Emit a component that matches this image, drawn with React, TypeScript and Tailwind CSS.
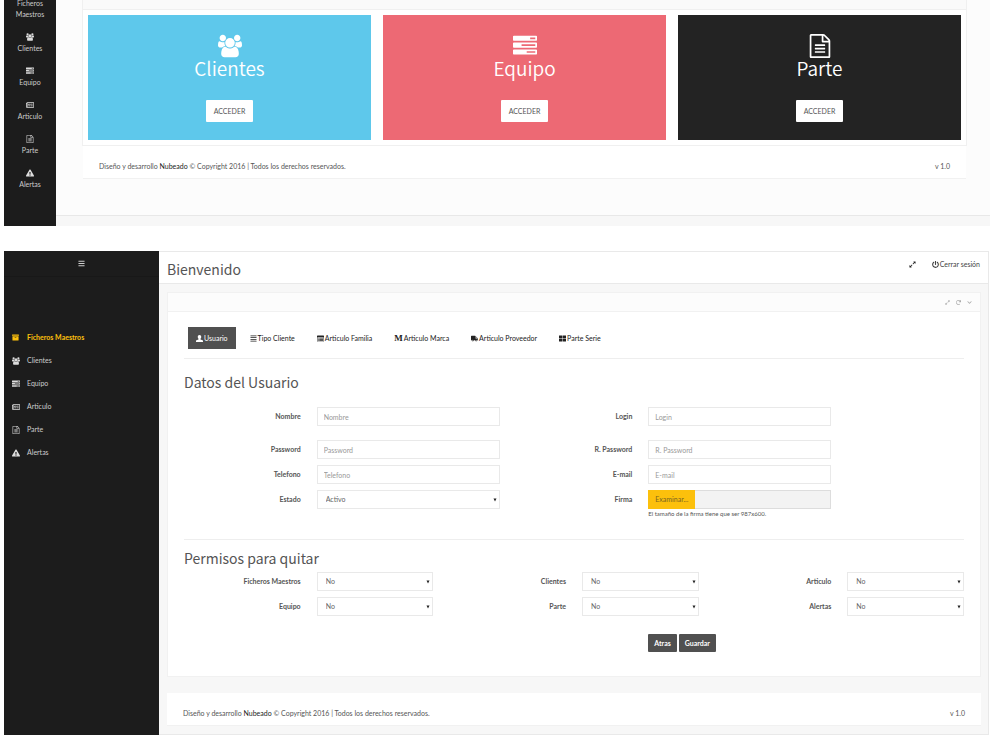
import React, { useState } from "react";
import {
  FaAlignJustify,
  FaArchive,
  FaBars,
  FaChevronDown,
  FaExclamationTriangle,
  FaExpandAlt,
  FaPowerOff,
  FaRedo,
  FaRegNewspaper,
  FaThLarge,
  FaTruck,
} from "react-icons/fa";

interface IconProps {
  className?: string;
}

const UsersIcon: React.FC<IconProps> = ({ className }) => (
  <svg viewBox="0 0 1920 1792" fill="currentColor" className={className}>
    <path d="M593 896q-162 5-265 128h-134q-82 0-138-40.5t-56-118.5q0-353 124-353 6 0 43.5 21t97.5 42.5 119 21.5q67 0 133-23-5 37-5 66 0 139 81 256zm1071 637q0 120-73 189.5t-194 69.5h-874q-121 0-194-69.5t-73-189.5q0-53 3.5-103.5t14-109 26.5-108.5 43-97.5 62-81 85.5-53.5 111.5-20q10 0 43 21.5t73 48 107 48 135 21.5 135-21.5 107-48 73-48 43-21.5q61 0 111.5 20t85.5 53.5 62 81 43 97.5 26.5 108.5 14 109 3.5 103.5zm-1024-1277q0 106-75 181t-181 75-181-75-75-181 75-181 181-75 181 75 75 181zm704 384q0 159-112.5 271.5t-271.5 112.5-271.5-112.5-112.5-271.5 112.5-271.5 271.5-112.5 271.5 112.5 112.5 271.5zm576 225q0 78-56 118.5t-138 40.5h-134q-103-123-265-128 81-117 81-256 0-29-5-66 66 23 133 23 59 0 119-21.5t97.5-42.5 43.5-21q124 0 124 353zm-128-609q0 106-75 181t-181 75-181-75-75-181 75-181 181-75 181 75 75 181z" />
  </svg>
);

const TasksIcon: React.FC<IconProps> = ({ className }) => (
  <svg viewBox="0 0 1792 1792" fill="currentColor" className={className}>
    <path d="M1024 1408h640v-128h-640v128zm-384-512h1024v-128h-1024v128zm640-512h384v-128h-384v128zm512 832v256q0 26-19 45t-45 19h-1664q-26 0-45-19t-19-45v-256q0-26 19-45t45-19h1664q26 0 45 19t19 45zm0-512v256q0 26-19 45t-45 19h-1664q-26 0-45-19t-19-45v-256q0-26 19-45t45-19h1664q26 0 45 19t19 45zm0-512v256q0 26-19 45t-45 19h-1664q-26 0-45-19t-19-45v-256q0-26 19-45t45-19h1664q26 0 45 19t19 45z" />
  </svg>
);

const FileIcon: React.FC<IconProps> = ({ className }) => (
  <svg viewBox="0 0 1792 1792" fill="currentColor" className={className}>
    <path d="M1596 380q28 28 48 76t20 88v1152q0 40-28 68t-68 28h-1344q-40 0-68-28t-28-68v-1600q0-40 28-68t68-28h896q40 0 88 20t76 48zm-444-244v376h376q-10-29-22-41l-313-313q-12-12-41-22zm384 1528v-1024h-416q-40 0-68-28t-28-68v-416h-768v1536h1280zm-1024-864q0-14 9-23t23-9h704q14 0 23 9t9 23v64q0 14-9 23t-23 9h-704q-14 0-23-9t-9-23v-64zm736 224q14 0 23 9t9 23v64q0 14-9 23t-23 9h-704q-14 0-23-9t-9-23v-64q0-14 9-23t23-9h704zm0 256q14 0 23 9t9 23v64q0 14-9 23t-23 9h-704q-14 0-23-9t-9-23v-64q0-14 9-23t23-9h704z" />
  </svg>
);

const UserIcon: React.FC<IconProps> = ({ className }) => (
  <svg viewBox="0 0 16 16" fill="currentColor" className={className}>
    <path d="M8 0c2.500 0 4 1.900 4 4.500 0 1.800-.8 3.300-1.700 4.200v1.300l4.700 2.200c.7.400 1 .9 1 1.600V16H0v-2.200c0-.7.300-1.200 1-1.600L5.700 10V8.700C4.800 7.800 4 6.300 4 4.500 4 1.900 5.500 0 8 0z" />
  </svg>
);

const ListAltIcon: React.FC<IconProps> = ({ className }) => (
  <svg viewBox="0 0 16 16" fill="currentColor" className={className}>
    <path fillRule="evenodd" d="M1 1h14a1 1 0 0 1 1 1v12a1 1 0 0 1-1 1H1a1 1 0 0 1-1-1V2a1 1 0 0 1 1-1zm0 4v9h14V5z" />
    <path d="M2 6h2v2H2zM5 6h9v2H5zM2 9h2v1H2zM5 9h9v1H5zM2 11h2v2H2zM5 11h9v2H5z" />
  </svg>
);

// letter mark used by the "Marca" tab
const MarcaIcon: React.FC<IconProps> = () => (
  <span className="font-['Liberation_Serif',serif] text-[9px] leading-none font-bold">M</span>
);

const menu = [
  { label: "Clientes", Icon: UsersIcon },
  { label: "Equipo", Icon: TasksIcon },
  { label: "Articulo", Icon: FaRegNewspaper },
  { label: "Parte", Icon: FileIcon },
  { label: "Alertas", Icon: FaExclamationTriangle },
];

const cards = [
  { label: "Clientes", Icon: UsersIcon, color: "bg-[#5ec8eb]" },
  { label: "Equipo", Icon: TasksIcon, color: "bg-[#ed6974]" },
  { label: "Parte", Icon: FileIcon, color: "bg-[#232323]" },
];

const tabs = [
  { label: "Usuario", Icon: UserIcon },
  { label: "Tipo Cliente", Icon: FaAlignJustify },
  { label: "Articulo Familia", Icon: ListAltIcon },
  { label: "Articulo Marca", Icon: MarcaIcon },
  { label: "Articulo Proveedor", Icon: FaTruck },
  { label: "Parte Serie", Icon: FaThLarge },
];

const permisos = ["Ficheros Maestros", "Clientes", "Articulo", "Equipo", "Parte", "Alertas"];

const labelClass = "col-span-2 px-2 text-right text-[7px] leading-[19px] font-bold text-[#555]";
const controlClass =
  "block h-[19px] w-full appearance-none rounded-none border border-[#e9e9e9] bg-white px-[6px] text-[7px] text-[#666] outline-none placeholder:text-[#999]";

const TextField: React.FC<{ id: string; label: string; type?: string }> = ({ id, label, type = "text" }) => (
  <>
    <label htmlFor={id} className={labelClass}>{label}</label>
    <div className="col-span-3 px-2">
      <input id={id} type={type} placeholder={label} className={controlClass} />
    </div>
  </>
);

const SelectField: React.FC<{ id: string; label: string; options: string[]; wide?: boolean }> = ({
  id,
  label,
  options,
  wide,
}) => (
  <>
    <label htmlFor={id} className={labelClass}>{label}</label>
    <div className={wide ? "col-span-3 px-2" : "col-span-2 px-2"}>
      <div className="relative">
        <select id={id} className={`${controlClass} pl-2`}>
          {options.map((o) => (
            <option key={o}>{o}</option>
          ))}
        </select>
        <svg viewBox="0 0 8 8" className="pointer-events-none absolute top-2 right-[3px] size-1 fill-[#222]">
          <path d="M1 1h6L4 7z" />
        </svg>
      </div>
    </div>
  </>
);

const Footer: React.FC = () => (
  <footer className="flex h-[33px] items-center justify-between border-b border-[#f1f1f1] bg-white px-4 pt-2 text-[7px] leading-3 text-[#555]">
    <p>
      Diseño y desarrollo <a href="#" className="text-[#222]">Nubeado</a> © Copyright 2016 | Todos los derechos reservados.
    </p>
    <p>v 1.0</p>
  </footer>
);

const HomePanel: React.FC = () => (
  <section className="mr-[10px] ml-1 flex h-[226px] overflow-hidden">
    <nav className="w-[52px] shrink-0 bg-[#1c1c1c] text-center text-[7px] text-[#ccc]">
      <a href="#" className="-mt-[2px] block h-[34px] leading-[11px]">
        Ficheros
        <br />
        Maestros
      </a>
      {menu.map(({ label, Icon }) => (
        <a key={label} href="#" className="flex h-[34px] flex-col items-center gap-px pt-px leading-3">
          <Icon className="size-2 text-[#ddd]" />
          {label}
        </a>
      ))}
    </nav>
    <div className="flex min-w-0 flex-1 flex-col bg-[#fcfcfc]">
      <div className="flex-1 pr-[23px] pl-[26px]">
        <div className="border border-t-0 border-[#f0f0f0] bg-white">
          <div className="h-[10px] border-b border-[#f0f0f0] bg-[#fafafa]" />
          <div className="grid grid-cols-3 gap-3 p-[5px]">
            {cards.map(({ label, Icon, color }) => (
              <div key={label} className={`flex h-[125px] flex-col items-center pt-[19px] text-white ${color}`}>
                <Icon className="size-6" />
                <h2 className="text-[19px] leading-5 font-[350]">{label}</h2>
                <button className="mt-[22px] h-[22px] rounded-[1px] bg-white px-2 text-[7px] text-[#555]">ACCEDER</button>
              </div>
            ))}
          </div>
        </div>
        <div className="px-px">
          <Footer />
        </div>
      </div>
      <div className="h-[11px] border-t border-[#e8e8e8] bg-[#f7f7f7]" />
    </div>
  </section>
);

const App: React.FC = () => {
  const [tab, setTab] = useState("Usuario");

  return (
    <main className="min-h-screen bg-white font-['Lato','Noto_Sans',sans-serif] [&_h1]:font-['Noto_Sans_CJK_JP',sans-serif] [&_h2]:font-['Noto_Sans_CJK_JP',sans-serif]">
      <HomePanel />

      <section className="mt-[25px] mr-[11px] ml-1 flex">
        <aside className="w-[155px] shrink-0 bg-[#1c1c1c] text-[7px] text-[#ccc]">
          <div className="flex h-[26px] items-center justify-center border-b border-[#181818]">
            <button aria-label="Menu">
              <FaBars className="size-[7px]" />
            </button>
          </div>
          <nav className="pt-[49px]">
            <a href="#" className="flex h-[23px] items-center gap-2 px-2 font-bold text-[#fcc00c]">
              <FaArchive className="size-[7px]" />
              Ficheros Maestros
            </a>
            {menu.map(({ label, Icon }) => (
              <a key={label} href="#" className="flex h-[23px] items-center gap-[7px] px-2">
                <Icon className="size-2 text-[#ddd]" />
                {label}
              </a>
            ))}
          </nav>
        </aside>

        <div className="min-w-0 flex-1 border-r border-b border-[#e9e9e9] bg-[#f7f7f7] pb-2">
          <header className="flex h-[33px] justify-between border-y border-[#e9e9e9] bg-white px-2">
            <h1 className="pt-[5px] text-[14px] leading-6 text-[#555]">Bienvenido</h1>
            <div className="flex h-6 items-center gap-4 text-[7px] text-[#444]">
              <button aria-label="Pantalla completa">
                <FaExpandAlt className="size-[7px] text-[#222]" />
              </button>
              <a href="#" className="flex items-center gap-px">
                <FaPowerOff className="size-[7px]" />
                Cerrar sesión
              </a>
            </div>
          </header>

          <div className="mt-2 mr-[7px] ml-2">
            <div className="border border-[#f1f1f1] bg-white">
              <div className="flex h-[19px] items-center justify-end gap-[6px] border-b border-[#f1f1f1] bg-[#fcfcfc] pr-2 text-[#aaa]">
                <button aria-label="Expandir"><FaExpandAlt className="size-[5px]" /></button>
                <button aria-label="Recargar"><FaRedo className="size-[5px]" /></button>
                <button aria-label="Contraer"><FaChevronDown className="size-[5px]" /></button>
              </div>

              <div className="px-4">
                <div className="flex h-[47px] items-center gap-[6px] border-b border-[#eee] pt-[6px] pl-1">
                  {tabs.map(({ label, Icon }) => (
                    <button
                      key={label}
                      onClick={() => setTab(label)}
                      className={`flex h-[22px] items-center gap-px px-2 text-[7px] ${
                        tab === label ? "bg-[#505050] text-white" : "text-[#222]"
                      }`}
                    >
                      <Icon className="size-[7px]" />
                      {label}
                    </button>
                  ))}
                </div>

                <form onSubmit={(e) => e.preventDefault()}>
                  <h2 className="pt-[11px] text-[14px] leading-6 text-[#555]">Datos del Usuario</h2>
                  <div className="-mx-2 mt-[13px] grid grid-cols-12">
                    <TextField id="nombre" label="Nombre" />
                    <TextField id="login" label="Login" />
                  </div>
                  <div className="-mx-2 mt-[14px] grid grid-cols-12 gap-y-[6px]">
                    <TextField id="password" label="Password" type="password" />
                    <TextField id="rpassword" label="R. Password" type="password" />
                    <div className="col-span-2" />
                    <TextField id="telefono" label="Telefono" />
                    <TextField id="email" label="E-mail" type="email" />
                    <div className="col-span-2" />
                    <SelectField id="estado" label="Estado" options={["Activo", "Inactivo"]} wide />
                    <label htmlFor="firma" className={labelClass}>Firma</label>
                    <div className="relative col-span-3 px-2">
                      <input id="firma" type="file" className="sr-only" />
                      <label htmlFor="firma" className="flex h-[19px] border border-[#ddd] bg-[#f3f3f3]">
                        <span className="-my-px -ml-px bg-[#fcc00c] px-[7px] text-[7px] leading-[19px] text-[#7a6420]">
                          Examinar...
                        </span>
                      </label>
                      <p className="text-[6px] leading-[10px] text-[#555]">El tamaño de la firma tiene que ser 987x600.</p>
                    </div>
                  </div>

                  <hr className="mt-5 border-[#eee]" />

                  <h2 className="pt-[6px] text-[14px] leading-6 text-[#555]">Permisos para quitar</h2>
                  <div className="-mx-2 mt-[2px] grid grid-cols-12 gap-y-[6px]">
                    {permisos.map((p) => (
                      <SelectField key={p} id={`permiso-${p}`} label={p} options={["No", "Si"]} />
                    ))}
                  </div>

                  <div className="-mx-2 mt-[18px] grid grid-cols-12 pb-6">
                    <div className="col-span-5 col-start-8 flex gap-[2px] px-2 text-[7px] font-bold text-white">
                      <button type="button" className="h-[18px] rounded-[1px] bg-[#505050] px-[6px]">Atras</button>
                      <button type="submit" className="h-[18px] rounded-[1px] bg-[#505050] px-[6px]">Guardar</button>
                    </div>
                  </div>
                </form>
              </div>
            </div>
            <div className="h-4" />
            <Footer />
          </div>
        </div>
      </section>
    </main>
  );
};

export default App;
